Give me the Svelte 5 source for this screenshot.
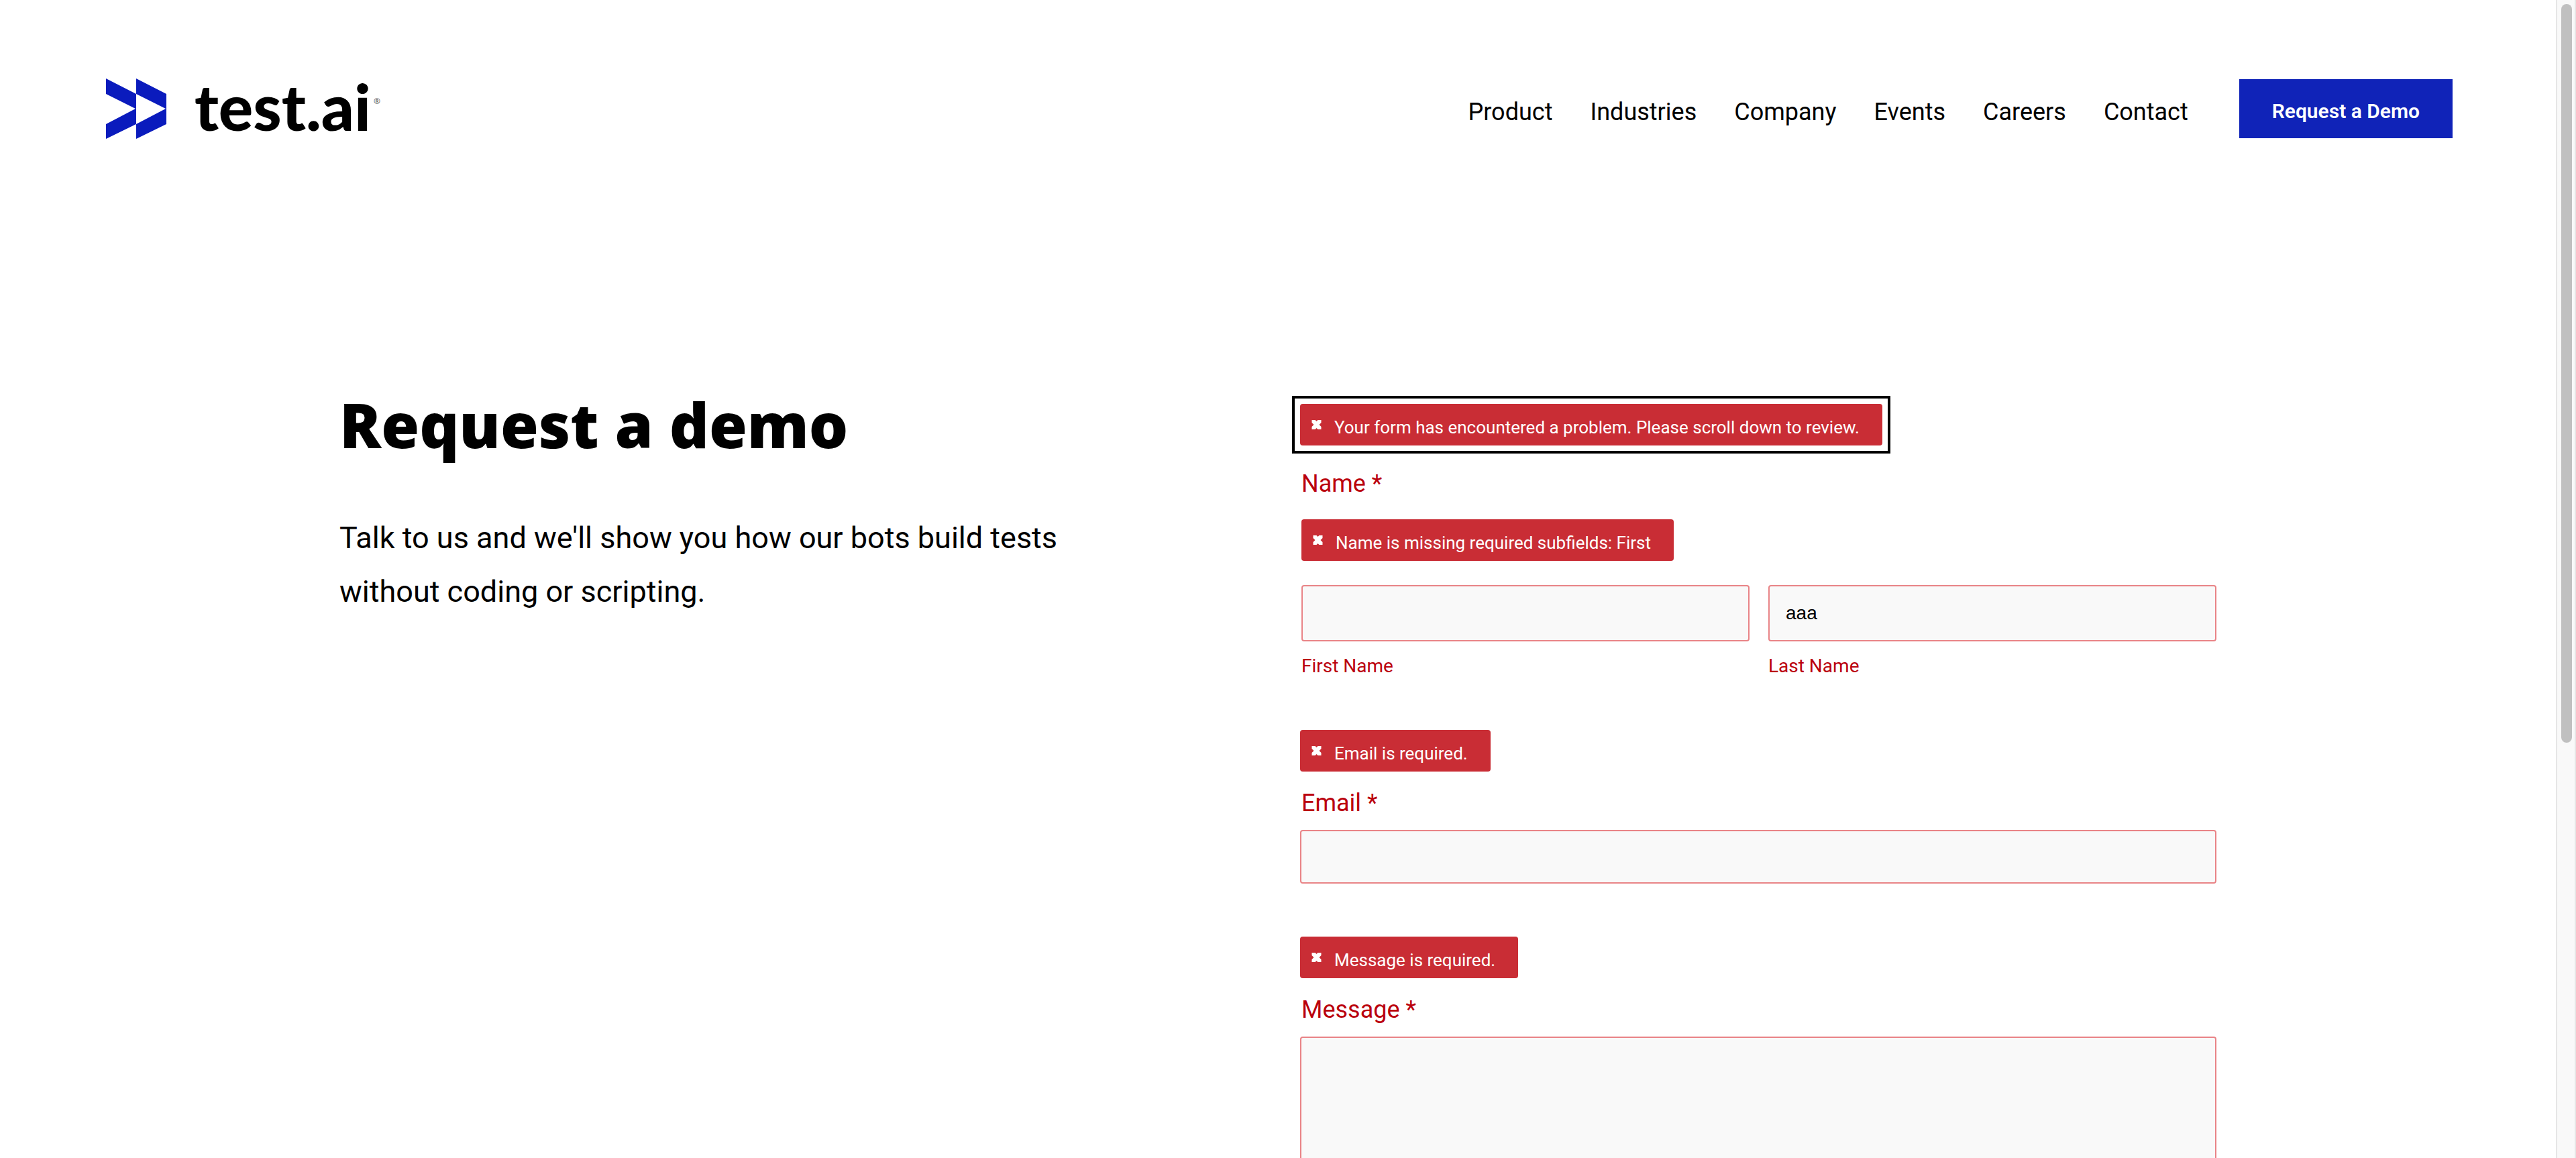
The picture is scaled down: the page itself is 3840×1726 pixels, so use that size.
<script>
  const links = ['Product', 'Industries', 'Company', 'Events', 'Careers', 'Contact'];

  let firstName = $state('');
  let lastName = $state('aaa');
  let email = $state('');
  let message = $state('');
</script>

{#snippet fieldError(text)}
  <p class="error" role="alert">
    <svg class="cross" viewBox="0 0 14 14" aria-hidden="true">
      <path d="M0 0H5L7 2L9 0H14V4L11 7L14 10V14H9L7 12L5 14H0V10L3 7L0 4Z" />
    </svg>
    <span>{text}</span>
  </p>
{/snippet}

<div class="window">
  <div class="page">
    <header>
      <a class="logo" href="#home" aria-label="test.ai home">
        <svg class="mark" viewBox="0 0 90 90" aria-hidden="true">
          <path d="M0 0L45 23V68L0 90V68L44 45L0 23Z" />
          <path d="M45 0L90 23V68L45 90V68L89 45L45 23Z" />
        </svg>
        <span class="wordmark">test.ai</span>
        <span class="registered">®</span>
      </a>
      <nav>
        {#each links as link}
          <a href={'#' + link.toLowerCase()}>{link}</a>
        {/each}
      </nav>
      <a class="cta" href="#demo">Request a Demo</a>
    </header>

    <main>
      <section class="intro">
        <h1>Request a demo</h1>
        <p>Talk to us and we'll show you how our bots build tests without coding or scripting.</p>
      </section>

      <form novalidate>
        <div class="summary">
          {@render fieldError('Your form has encountered a problem. Please scroll down to review.')}
        </div>

        <fieldset>
          <legend>Name *</legend>
          {@render fieldError('Name is missing required subfields: First')}
          <div class="names">
            <div class="name">
              <input id="first" type="text" bind:value={firstName} />
              <label for="first">First Name</label>
            </div>
            <div class="name">
              <input id="last" type="text" bind:value={lastName} />
              <label for="last">Last Name</label>
            </div>
          </div>
        </fieldset>

        <div class="field">
          {@render fieldError('Email is required.')}
          <label for="email">Email *</label>
          <input id="email" type="email" bind:value={email} />
        </div>

        <div class="field">
          {@render fieldError('Message is required.')}
          <label for="message">Message *</label>
          <textarea id="message" rows="10" bind:value={message}></textarea>
        </div>
      </form>
    </main>
  </div>
  <div class="scrollbar" aria-hidden="true"><div class="thumb"></div></div>
</div>

<style>
  :global(body) {
    margin: 0;
    background: #fff;
    overflow: hidden;
  }

  .window {
    display: flex;
    height: 100vh;
    font-family: Roboto, 'Liberation Sans', sans-serif;
    color: #000;
  }

  .page {
    flex: 1;
    min-width: 0;
    overflow: hidden;
  }

  header {
    display: flex;
    align-items: flex-start;
    padding: 117px 154px 0 158px;
  }

  a {
    color: inherit;
    text-decoration: none;
  }

  .logo {
    display: flex;
    align-items: flex-start;
    margin-right: auto;
  }

  .mark {
    width: 90px;
    height: 90px;
    fill: #0a1bbd;
  }

  .wordmark {
    margin-left: 42px;
    font: 900 96px/82px Lato, sans-serif;
  }

  .registered {
    margin: 26px 0 0 4px;
    font: 12px/16px Lato, sans-serif;
    color: #333;
  }

  nav {
    display: flex;
    gap: 56px;
    padding-top: 6px;
    margin-right: 76px;
    font-size: 36px;
    line-height: 88px;
  }

  .cta {
    margin-top: 1px;
    padding: 32px 49px 24px;
    background: #1023b8;
    color: #fff;
    font-size: 30px;
    font-weight: 600;
    line-height: 32px;
  }

  main {
    display: grid;
    grid-template-columns: 1fr 1fr;
    gap: 66px;
    max-width: 2798px;
    margin: 365px auto 0;
  }

  h1 {
    margin: 0 0 72px;
    font: 800 92px/114px 'Open Sans', sans-serif;
  }

  .intro p {
    max-width: 1120px;
    margin: 0;
    font-size: 45px;
    line-height: 80px;
  }

  form {
    padding-top: 26px;
    color: #ba000d;
  }

  .error {
    display: flex;
    align-items: center;
    gap: 19px;
    width: fit-content;
    margin: 0;
    padding: 12px 34px 12px 17px;
    border-radius: 4px;
    background: #c92d35;
    color: #fff;
    font-size: 26px;
    line-height: 30px;
  }

  .error span {
    padding-top: 8px;
  }

  .cross {
    width: 15px;
    height: 14px;
    fill: #fff;
  }

  .summary {
    width: fit-content;
    margin-bottom: 37px;
    outline: 4px solid #000;
    outline-offset: 8px;
  }

  fieldset {
    min-width: 0;
    margin: 0 0 79px;
    padding: 0 0 0 2px;
    border: 0;
  }

  legend {
    padding: 0;
    margin-bottom: 33px;
    font-size: 36px;
    line-height: 40px;
  }

  .names {
    display: grid;
    grid-template-columns: 1fr 1fr;
    gap: 28px;
    margin-top: 36px;
  }

  .name label {
    display: block;
    margin-top: 21px;
    font-size: 28px;
    line-height: 32px;
  }

  input,
  textarea {
    display: block;
    box-sizing: border-box;
    width: 100%;
    height: 80px;
    padding: 0 24px;
    border: 2px solid #e98487;
    border-radius: 4px;
    background: #f9f9f9;
    color: #000;
    font: 28px/36px 'Liberation Sans', sans-serif;
    outline: 0;
  }

  .name input {
    height: 84px;
  }

  textarea {
    height: 360px;
    padding: 24px;
    resize: none;
  }

  .field {
    margin-bottom: 79px;
  }

  .field label {
    display: block;
    margin: 27px 0 20px;
    padding-left: 2px;
    font-size: 36px;
    line-height: 40px;
  }

  .scrollbar {
    box-sizing: border-box;
    width: 30px;
    padding: 6px 4px 0 6px;
    border: solid #e6e6e6;
    border-width: 0 2px;
    background: #f9f9f9;
  }

  .thumb {
    height: 64%;
    border-radius: 8px;
    background: #c0c0c0;
  }
</style>
